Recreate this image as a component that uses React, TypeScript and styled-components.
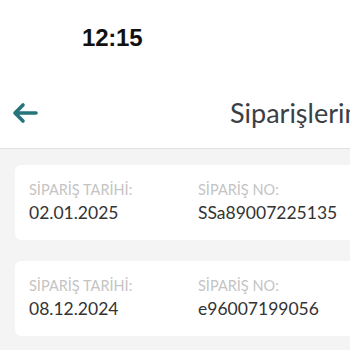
import React from "react";
import styled, { createGlobalStyle } from "styled-components";

const Global = createGlobalStyle`
  html, body { margin: 0; padding: 0; background: #f4f4f4; overflow: hidden; }
  body { width: 350px; height: 350px; font-family: Lato, "Noto Sans", sans-serif; }
`;

const Screen = styled.div`
  width: 350px;
  height: 350px;
  overflow: hidden;
  background: #f4f4f4;
`;

const Header = styled.div`
  background: #fff;
  border-bottom: 1px solid #e2e2e2;
  height: 148px;
  display: flex;
  flex-direction: column;
`;

const StatusBar = styled.div`
  height: 80px;
  display: flex;
  align-items: flex-start;
  padding: 24px 0 0 82px;
  box-sizing: border-box;
`;

const Time = styled.span`
  font-family: "Liberation Sans", Arial, sans-serif;
  font-weight: 700;
  font-size: 24px;
  letter-spacing: -0.2px;
  color: #111;
`;

const NavBar = styled.div`
  display: flex;
  align-items: center;
  padding: 0 0 0 12px;
  height: 70px;
  margin-top: -1px;
`;

const BackButton = styled.div`
  width: 26px;
  height: 22px;
  display: flex;
  align-items: center;
`;

const Title = styled.div`
  margin-left: 192px;
  font-size: 27px;
  color: #3b4046;
  white-space: nowrap;
  margin-top: -2px;
`;

const Content = styled.div`
  display: flex;
  flex-direction: column;
  gap: 21px;
  padding: 16px 0 0 15px;
`;

const Card = styled.div`
  width: 560px;
  height: 75px;
  background: #fff;
  border-radius: 6px;
  box-sizing: border-box;
  padding: 15px 0 0 14px;
  display: flex;
`;

const Field = styled.div<{ $w: number }>`
  width: ${(p) => p.$w}px;
  display: flex;
  flex-direction: column;
`;

const Label = styled.span`
  font-size: 14.5px;
  color: #c4c4c4;
  line-height: 20px;
`;

const Value = styled.span`
  font-size: 17.5px;
  color: #333;
  line-height: 22px;
  margin-top: 2px;
`;

const orders = [
  { date: "02.01.2025", no: "SSa89007225135" },
  { date: "08.12.2024", no: "e96007199056" },
];

export default function App() {
  return (
    <Screen>
      <Global />
      <Header>
        <StatusBar>
          <Time>12:15</Time>
        </StatusBar>
        <NavBar>
          <BackButton>
            <svg width="26" height="22" viewBox="0 0 26 22">
              <path
                d="M24 11 H3 M11 3 L3 11 L11 19"
                fill="none"
                stroke="#25747a"
                strokeWidth="3.6"
                strokeLinecap="round"
                strokeLinejoin="round"
              />
            </svg>
          </BackButton>
          <Title>Siparişlerim</Title>
        </NavBar>
      </Header>
      <Content>
        {orders.map((o) => (
          <Card key={o.no}>
            <Field $w={169}>
              <Label>SİPARİŞ TARİHİ:</Label>
              <Value>{o.date}</Value>
            </Field>
            <Field $w={200}>
              <Label>SİPARİŞ NO:</Label>
              <Value>{o.no}</Value>
            </Field>
          </Card>
        ))}
      </Content>
    </Screen>
  );
}
